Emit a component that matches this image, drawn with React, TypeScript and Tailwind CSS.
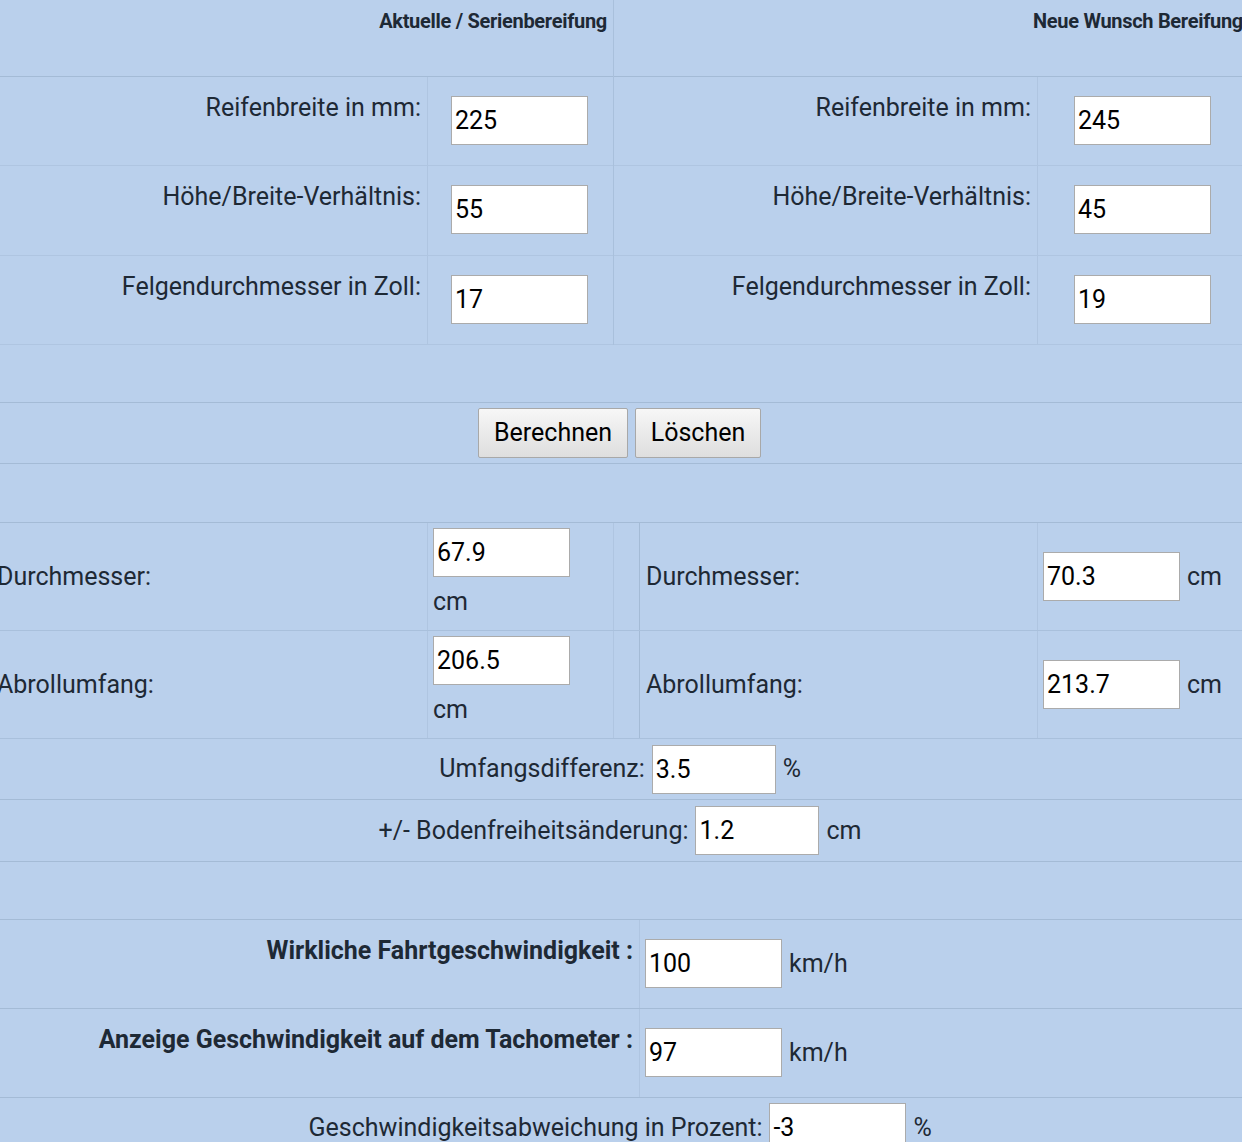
import React from 'react'

// Reifenrechner: Vergleich Serienbereifung / Wunschbereifung

function Field({ value, wide = true }: { value: string; wide?: boolean }) {
  return (
    <input
      readOnly
      value={value}
      className={
        wide
          ? 'h-[49px] w-[137px] shrink-0 border border-[#ababab] bg-white px-[3px] text-[25px] text-black outline-none'
          : 'h-[49px] w-[124px] shrink-0 border border-[#ababab] bg-white px-[3px] text-[25px] text-black outline-none'
      }
    />
  )
}

const tyreRows = [
  { label: 'Reifenbreite in mm:', current: '225', wish: '245', h: 'h-[89px]' },
  { label: 'Höhe/Breite-Verhältnis:', current: '55', wish: '45', h: 'h-[90px]' },
  { label: 'Felgendurchmesser in Zoll:', current: '17', wish: '19', h: 'h-[89px]' },
]

const resultRows = [
  { label: 'Durchmesser:', current: '67.9', wish: '70.3' },
  { label: 'Abrollumfang:', current: '206.5', wish: '213.7' },
]

export default function App() {
  return (
    <div className="w-full overflow-hidden bg-[#bad0ec] font-['Roboto',sans-serif] text-[25px] text-[#1e2935]">
      <div className="-ml-[6px] w-[1251px]">
        {/* Eingabe der Reifendaten */}
        <div className="flex">
          <div className="w-[620px] border-r border-[#a9c0dc]">
            <div className="h-[77px] border-b border-[#a4bbd6] pr-[6px] pt-[6px] text-right text-[20px] font-bold tracking-[-0.3px]">
              Aktuelle / Serienbereifung
            </div>
            {tyreRows.map((r) => (
              <div key={r.label} className={`flex ${r.h} border-b border-[#afc5e1]`}>
                <div className="w-[434px] border-r border-[#afc5e1] pr-[6px] pt-[12px] text-right">{r.label}</div>
                <div className="flex-1 pl-[23px] pt-[19px]">
                  <Field value={r.current} />
                </div>
              </div>
            ))}
          </div>
          <div className="flex-1">
            <div className="h-[77px] whitespace-nowrap border-b border-[#a4bbd6] pr-[2px] pt-[6px] text-right text-[20px] font-bold tracking-[-0.3px]">
              Neue Wunsch Bereifung
            </div>
            {tyreRows.map((r) => (
              <div key={r.label} className={`flex ${r.h} border-b border-[#afc5e1]`}>
                <div className="w-[424px] border-r border-[#afc5e1] pr-[6px] pt-[12px] text-right">{r.label}</div>
                <div className="flex-1 pl-[36px] pt-[19px]">
                  <Field value={r.wish} />
                </div>
              </div>
            ))}
          </div>
        </div>

        <div className="h-[58px] border-b border-[#a4bbd6]" />

        <div className="flex h-[61px] items-center justify-center gap-[7px] border-b border-[#a4bbd6]">
          <button className="h-[50px] w-[150px] rounded-[2px] border border-[#a8a8a8] bg-gradient-to-b from-[#f7f7f7] to-[#dedede] text-[25px] text-black">
            Berechnen
          </button>
          <button className="h-[50px] w-[126px] rounded-[2px] border border-[#a8a8a8] bg-gradient-to-b from-[#f7f7f7] to-[#dedede] text-[25px] text-black">
            Löschen
          </button>
        </div>

        <div className="h-[59px] border-b border-[#a4bbd6]" />

        {/* Ergebnisse */}
        {resultRows.map((r) => (
          <div key={r.label} className="flex h-[108px] border-b border-[#a9c0dc]">
            <div className="flex w-[434px] items-center border-r border-[#afc5e1] pl-[3px]">{r.label}</div>
            <div className="flex w-[186px] flex-col items-start gap-[5px] border-r border-[#afc5e1] pl-[5px] pt-[5px]">
              <Field value={r.current} />
              <span className="leading-[40px]">cm</span>
            </div>
            <div className="w-[26px] border-r border-[#a4bbd6]" />
            <div className="flex w-[398px] items-center border-r border-[#afc5e1] pl-[6px]">{r.label}</div>
            <div className="flex flex-1 items-center gap-[7px] pl-[5px]">
              <Field value={r.wish} />
              <span>cm</span>
            </div>
          </div>
        ))}

        <div className="flex h-[61px] items-center justify-center gap-[7px] border-b border-[#a4bbd6]">
          <span>Umfangsdifferenz:</span>
          <Field value="3.5" wide={false} />
          <span className="w-[17px]">%</span>
        </div>
        <div className="flex h-[62px] items-center justify-center gap-[7px] border-b border-[#a4bbd6]">
          <span>+/- Bodenfreiheitsänderung:</span>
          <Field value="1.2" wide={false} />
          <span className="w-[34px]">cm</span>
        </div>

        <div className="h-[58px] border-b border-[#a4bbd6]" />

        {/* Tachoabweichung */}
        {[
          { label: 'Wirkliche Fahrtgeschwindigkeit :', value: '100' },
          { label: 'Anzeige Geschwindigkeit auf dem Tachometer :', value: '97' },
        ].map((r) => (
          <div key={r.label} className="flex h-[89px] border-b border-[#a4bbd6]">
            <div className="w-[646px] border-r border-[#afc5e1] pr-[6px] pt-[12px] text-right font-bold">{r.label}</div>
            <div className="flex flex-1 items-center gap-[7px] self-start pl-[5px] pt-[19px]">
              <Field value={r.value} />
              <span>km/h</span>
            </div>
          </div>
        ))}

        <div className="flex items-center justify-center gap-[7px] pb-[10px] pt-[5px]">
          <span>Geschwindigkeitsabweichung in Prozent:</span>
          <Field value="-3" />
          <span className="w-[17px]">%</span>
        </div>
      </div>
    </div>
  )
}
